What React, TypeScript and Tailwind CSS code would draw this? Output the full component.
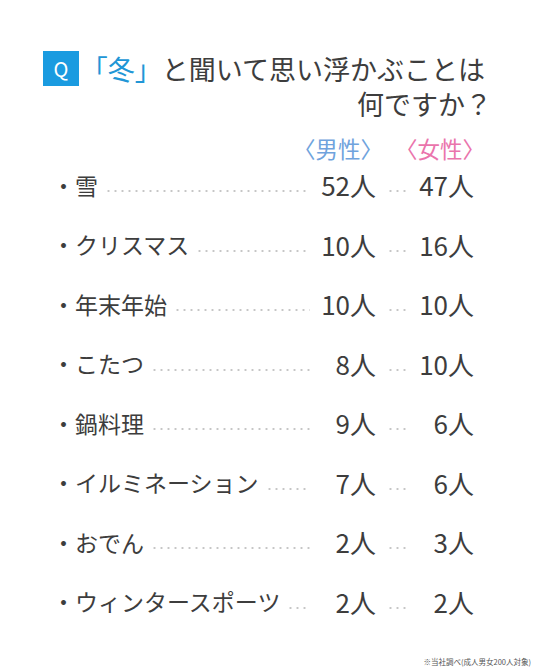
import React from "react";

const rows: { label: string; m: string; f: string }[] = [
  { label: "雪", m: "52人", f: "47人" },
  { label: "クリスマス", m: "10人", f: "16人" },
  { label: "年末年始", m: "10人", f: "10人" },
  { label: "こたつ", m: "8人", f: "10人" },
  { label: "鍋料理", m: "9人", f: "6人" },
  { label: "イルミネーション", m: "7人", f: "6人" },
  { label: "おでん", m: "2人", f: "3人" },
  { label: "ウィンタースポーツ", m: "2人", f: "2人" },
];

const font = {
  fontFamily: '"Noto Sans CJK JP", "Noto Sans", sans-serif',
};

const dots =
  "h-[4px] mt-[12px] bg-[radial-gradient(circle,#c6c6c6_0.9px,transparent_1.3px)] bg-[length:7px_4px] bg-repeat-x";

export default function App() {
  return (
    <div
      className="w-[536px] h-[672px] bg-white overflow-hidden text-[#3d3d3d]"
      style={font}
    >
      <div className="pt-[51px] pl-[43px] pr-[51px] flex items-start">
        <div className="w-[36px] h-[35px] shrink-0 bg-[#1a9be0] text-white flex items-center justify-center text-[20px] leading-none">
          Q
        </div>
        <div className="flex-1 text-right text-[27px] leading-[35px] whitespace-nowrap">
          <span className="text-[#2196d6]">「冬」</span>と聞いて思い浮かぶことは
          <br />
          何ですか<span className="mr-[-7px]">？</span>
        </div>
      </div>

      <div className="mt-[16px] h-[22px] flex pl-[293px] text-[22.5px] leading-[22px] whitespace-nowrap">
        <span className="w-[88px] text-[#6fa3dd]">〈男性〉</span>
        <span className="ml-[14px] w-[88px] text-[#ea74ac]">〈女性〉</span>
      </div>

      <div className="mt-[-3.5px]">
        {rows.map((r) => (
          <div key={r.label} className="flex items-center h-[59.5px] pl-[52px] pr-[62px]">
            <span className="text-[23px] leading-none whitespace-nowrap">・{r.label}</span>
            <span className={`flex-1 ml-[7px] ${dots}`} />
            <span className="w-[66px] text-right text-[26px] leading-none whitespace-nowrap">{r.m}</span>
            <span className={`ml-[11px] w-[19px] ${dots}`} />
            <span className="w-[68px] text-right text-[26px] leading-none whitespace-nowrap">{r.f}</span>
          </div>
        ))}
      </div>

      <div className="mt-[25px] pr-[5px] text-right text-[7.5px] leading-[10px] text-[#555] whitespace-nowrap">
        ※当社調べ(成人男女200人対象)
      </div>
    </div>
  );
}
